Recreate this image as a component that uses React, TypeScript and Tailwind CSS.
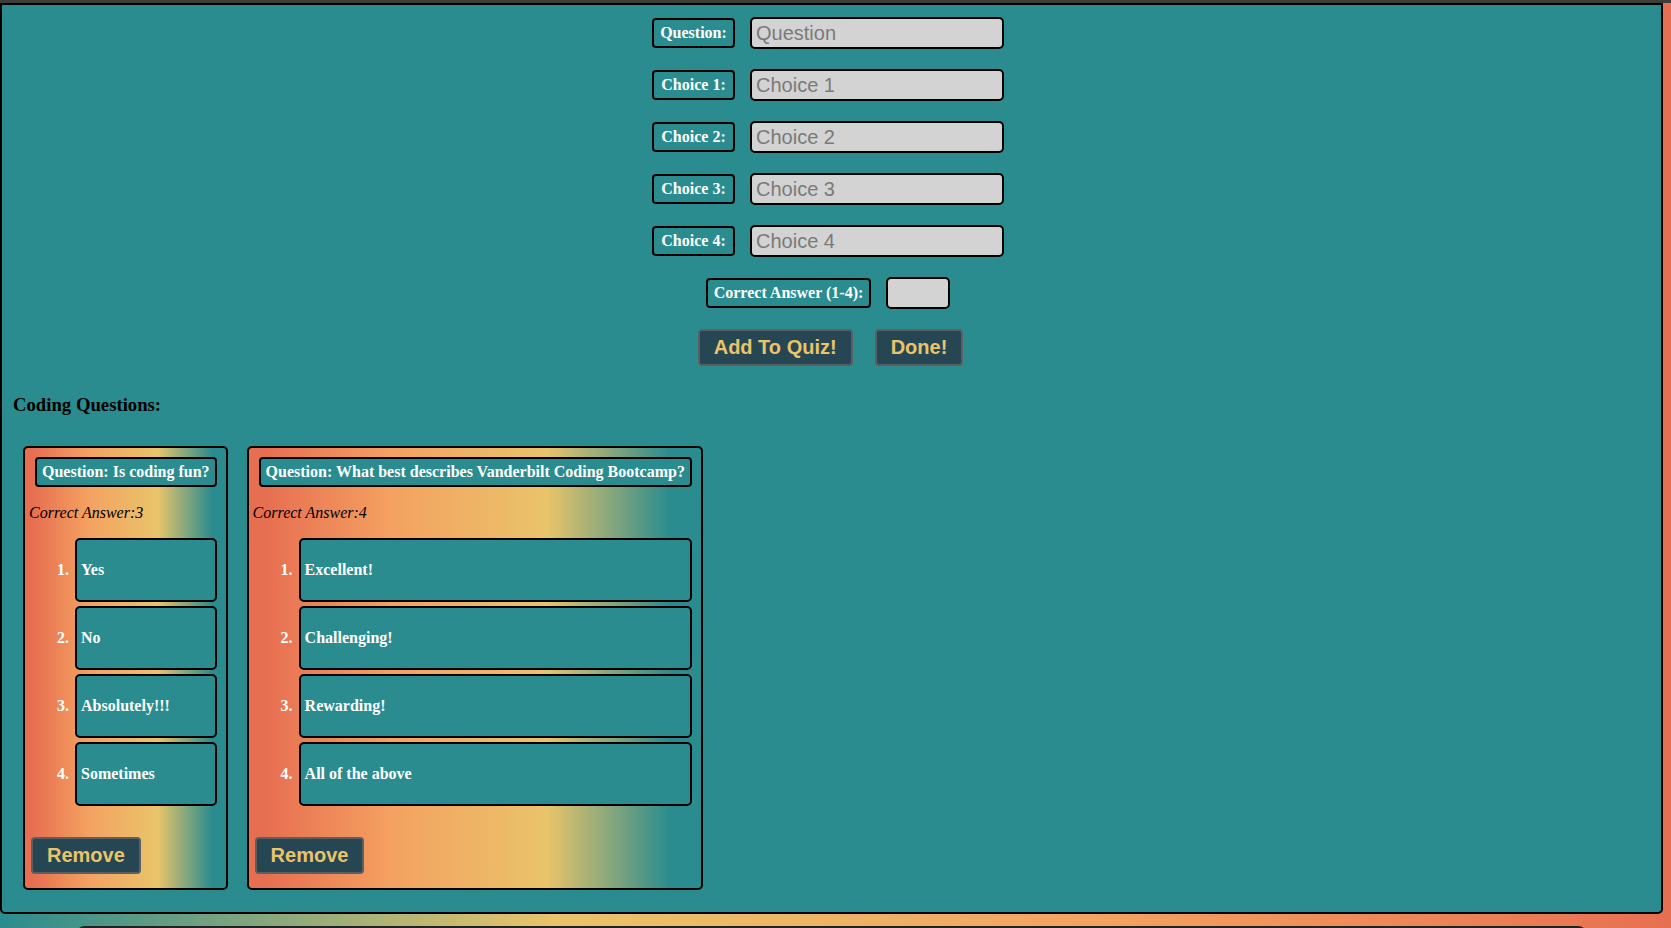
import React from "react";

const cards = [
  {
    q: "Is coding fun?",
    answer: 3,
    choices: ["Yes", "No", "Absolutely!!!", "Sometimes"],
  },
  {
    q: "What best describes Vanderbilt Coding Bootcamp?",
    answer: 4,
    choices: ["Excellent!", "Challenging!", "Rewarding!", "All of the above"],
  },
];

function Label({ children, wide }: { children: React.ReactNode; wide?: boolean }) {
  return (
    <div
      className={
        (wide ? "px-[6px] " : "w-[83px] ") +
        "h-[30px] flex items-center justify-center border-2 border-black rounded-[4px] bg-[#2a8c8e] text-white font-bold text-[16px] leading-[18px] font-['Liberation_Serif',serif] whitespace-nowrap"
      }
    >
      {children}
    </div>
  );
}

function Field({ placeholder, small }: { placeholder?: string; small?: boolean }) {
  return (
    <input
      placeholder={placeholder}
      className={
        (small ? "w-[64px] " : "w-[254px] ") +
        "h-[32px] border-2 border-black rounded-[5px] bg-[#d3d3d3] px-[4px] text-[20px] text-black placeholder:text-[#7a7a7a] font-['Liberation_Sans',Arial,sans-serif] outline-none"
      }
    />
  );
}

function Btn({ children }: { children: React.ReactNode }) {
  return (
    <button className="h-[37px] px-[14px] border-2 border-[#5a5f61] rounded-[4px] bg-[#264653] text-[#e9c46a] font-bold text-[20px] leading-[23px] font-['Liberation_Sans',Arial,sans-serif] whitespace-nowrap">
      {children}
    </button>
  );
}

export default function App() {
  return (
    <div className="h-[928px] w-[1671px] overflow-hidden bg-[linear-gradient(to_right,#2a8c8e,#e9c46a_33%,#f4a261_66%,#e76f51)]">
      <div className="h-[3px] bg-[#3c3c3c]" />
      <div className="w-[1663px] border-2 border-black rounded-b-[5px] bg-[#2a8c8e]">
        <div className="pt-[12px] pr-[7px] flex flex-col items-center gap-[20px]">
          <div className="flex items-center gap-[15px] h-[32px]">
            <Label>Question:</Label>
            <Field placeholder="Question" />
          </div>
          {[1, 2, 3, 4].map((n) => (
            <div key={n} className="flex items-center gap-[15px] h-[32px]">
              <Label>Choice {n}:</Label>
              <Field placeholder={`Choice ${n}`} />
            </div>
          ))}
          <div className="flex items-center gap-[15px] h-[32px]">
            <Label wide>Correct Answer (1-4):</Label>
            <Field small />
          </div>
          <div className="flex items-center gap-[22px] pl-[5px]">
            <Btn>Add To Quiz!</Btn>
            <Btn>Done!</Btn>
          </div>
        </div>

        <h3 className="mt-[28px] pl-[11px] text-[18.72px] leading-[22px] font-bold text-black font-['Liberation_Serif',serif]">
          Coding Questions:
        </h3>

        <div className="mt-[30px] pl-[21px] pb-[22px] flex items-start gap-[19px]">
          {cards.map((c, i) => (
            <div
              key={i}
              className="flex flex-col w-fit border-2 border-black rounded-[5px] bg-[linear-gradient(to_right,#e76f51_4%,#f4a261_32%,#e9c46a_66%,#2a8c8e_93%)] font-['Liberation_Serif',serif]"
            >
              <div className="ml-[10px] mr-[9px] mt-[9px] h-[30px] flex items-center px-[5px] border-2 border-black rounded-[4px] bg-[#2a8c8e] text-white font-bold text-[16px] leading-[18px] whitespace-nowrap">
                Question: {c.q}
              </div>
              <p className="ml-[4px] mt-[16px] italic text-[16px] leading-[19px] text-black">
                Correct Answer:{c.answer}
              </p>
              <div className="mt-[16px] mr-[9px] flex flex-col gap-[4px]">
                {c.choices.map((ch, j) => (
                  <div key={j} className="flex items-center">
                    <span className="w-[50px] shrink-0 pr-[6px] text-right text-white font-bold text-[16px] leading-[18px]">
                      {j + 1}.
                    </span>
                    <div className="flex-1 h-[64px] flex items-center pl-[4px] pr-[4px] border-2 border-black rounded-[5px] bg-[#2a8c8e] text-white font-bold text-[16px] leading-[18px] whitespace-nowrap">
                      {ch}
                    </div>
                  </div>
                ))}
              </div>
              <div className="mt-[31px] mb-[14px] ml-[6px]">
                <Btn>Remove</Btn>
              </div>
            </div>
          ))}
        </div>
      </div>
      <div className="mt-[12px] ml-[75px] w-[1513px] h-[40px] border-2 border-[#222] rounded-t-[10px] bg-[#2a8c8e]" />
    </div>
  );
}
